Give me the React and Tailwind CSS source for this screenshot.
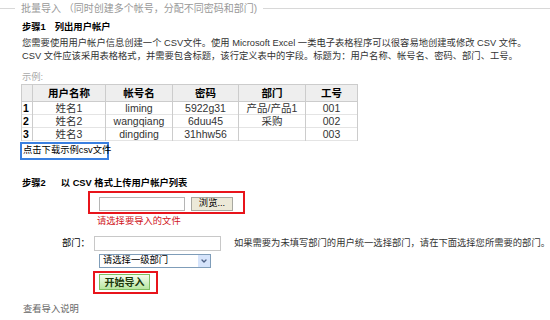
import { ChevronDown } from "lucide-react";

const filas = [
  { n: "1", nombre: "姓名1", cuenta: "liming", clave: "5922g31", dept: "产品/产品1", num: "001" },
  { n: "2", nombre: "姓名2", cuenta: "wangqiang", clave: "6duu45", dept: "采购", num: "002" },
  { n: "3", nombre: "姓名3", cuenta: "dingding", clave: "31hhw56", dept: "", num: "003" },
];

export default function App() {
  return (
    <div
      className="w-[550px] h-[320px] bg-white text-[#333] text-[9.3px] overflow-hidden"
      style={{ fontFamily: '"Liberation Sans", "Noto Sans CJK SC", sans-serif' }}
    >
      {/* Leyenda */}
      <div className="flex items-center h-[16px]">
        <div className="w-[15px] h-px bg-[#d8d8d8]" />
        <span className="px-[6px] text-[#999] text-[10px]">批量导入 （同时创建多个帐号，分配不同密码和部门)</span>
        <div className="flex-1 h-px bg-[#d8d8d8]" />
      </div>

      <div className="pl-[22px]">
        {/* Paso 1 */}
        <div className="mt-[4px] h-[14px] leading-[14px] font-bold text-black">
          <span>步骤1</span>
          <span className="ml-[9px]">列出用户帐户</span>
        </div>
        <div className="mt-[3px] leading-[13px]">
          <p>您需要使用用户帐户信息创建一个 CSV文件。使用 Microsoft Excel 一类电子表格程序可以很容易地创建或修改 CSV 文件。</p>
          <p>CSV 文件应该采用表格格式，并需要包含标题，该行定义表中的字段。标题为：用户名称、帐号名、密码、部门、工号。</p>
        </div>

        <div className="mt-[8px] leading-[13px] text-[#aaa]">示例:</div>

        <table className="-ml-[1px] w-[337px] table-fixed border-collapse border border-[#ccc] text-center text-[10.5px]">
          <colgroup>
            <col className="w-[11px]" />
            <col className="w-[73px]" />
            <col className="w-[67px]" />
            <col className="w-[66px]" />
            <col className="w-[67px]" />
            <col className="w-[52px]" />
          </colgroup>
          <thead>
            <tr className="bg-[#eeeeee] h-[17px] leading-[15px] font-bold text-black">
              <th className="border border-[#ccc]"></th>
              <th className="border border-[#ccc]">用户名称</th>
              <th className="border border-[#ccc]">帐号名</th>
              <th className="border border-[#ccc]">密码</th>
              <th className="border border-[#ccc]">部门</th>
              <th className="border border-[#ccc]">工号</th>
            </tr>
          </thead>
          <tbody>
            {filas.map((f) => (
              <tr key={f.n} className="h-[12.7px] leading-[12px] border-b border-[#e4e4e4]">
                <td className="border-x border-[#ccc] text-left pl-[1px] font-bold text-black">{f.n}</td>
                <td className="border-x border-[#ccc]">{f.nombre}</td>
                <td className="border-x border-[#ccc]">{f.cuenta}</td>
                <td className="border-x border-[#ccc]">{f.clave}</td>
                <td className="border-x border-[#ccc] align-top">{f.dept}</td>
                <td className="border-x border-[#ccc]">{f.num}</td>
              </tr>
            ))}
          </tbody>
        </table>

        <div className="mt-[1px] -ml-[2px] w-[89px] h-[18px] border-2 border-[#3a7fe0] flex items-center pl-[1px] text-black whitespace-nowrap">
          点击下载示例csv文件
        </div>

        {/* Paso 2 */}
        <div className="mt-[16px] h-[14px] leading-[14px] font-bold text-black">
          <span>步骤2</span>
          <span className="ml-[15px]">以 CSV 格式上传用户帐户列表</span>
        </div>

        <div className="ml-[66px] mt-[1px] w-[157px] h-[23px] border-2 border-[#e8141b] flex items-end pb-[1px] pl-[9px] gap-[6px]">
          <div className="w-[86px] h-[14px] border border-[#b5b5b5] bg-white" />
          <div className="w-[42px] h-[14px] border border-[#a8a8a0] bg-[#ece9d8] text-black flex items-center justify-center">
            浏览...
          </div>
        </div>
        <div className="ml-[75px] mt-[1px] leading-[12px] text-[#d0141b]">请选择要导入的文件</div>

        <div className="mt-[9px] flex items-center h-[15px]">
          <span className="ml-[40px] w-[34px] text-black">部门：</span>
          <div className="w-[134px] h-[15px] border border-[#c8c8c8] bg-white" />
          <span className="ml-[13px] whitespace-nowrap">如果需要为未填写部门的用户统一选择部门，请在下面选择您所需要的部门。</span>
        </div>

        <div className="ml-[77px] mt-[3px] w-[112px] h-[14px] border border-[#7f9db9] bg-white flex items-center">
          <span className="flex-1 pl-[3px] text-black">请选择一级部门</span>
          <div className="w-[12px] h-[12px] bg-[#d6e4fb] flex items-center justify-center">
            <ChevronDown className="w-[8px] h-[8px] text-[#4d6185]" strokeWidth={4} />
          </div>
        </div>

        <div className="ml-[71px] mt-[3px] w-[65px] h-[23px] border-2 border-[#e8141b] pl-[4px] pt-[1px]">
          <div className="w-[51px] h-[16px] border border-[#7fbf62] bg-gradient-to-b from-[#f4fdef] to-[#b8e6a0] flex items-center justify-center font-bold text-[#1d3a0c] text-[10px]">
            开始导入
          </div>
        </div>

        <div className="mt-[9px] leading-[12px] text-[#666] ml-[1px]">查看导入说明</div>
      </div>
    </div>
  );
}
